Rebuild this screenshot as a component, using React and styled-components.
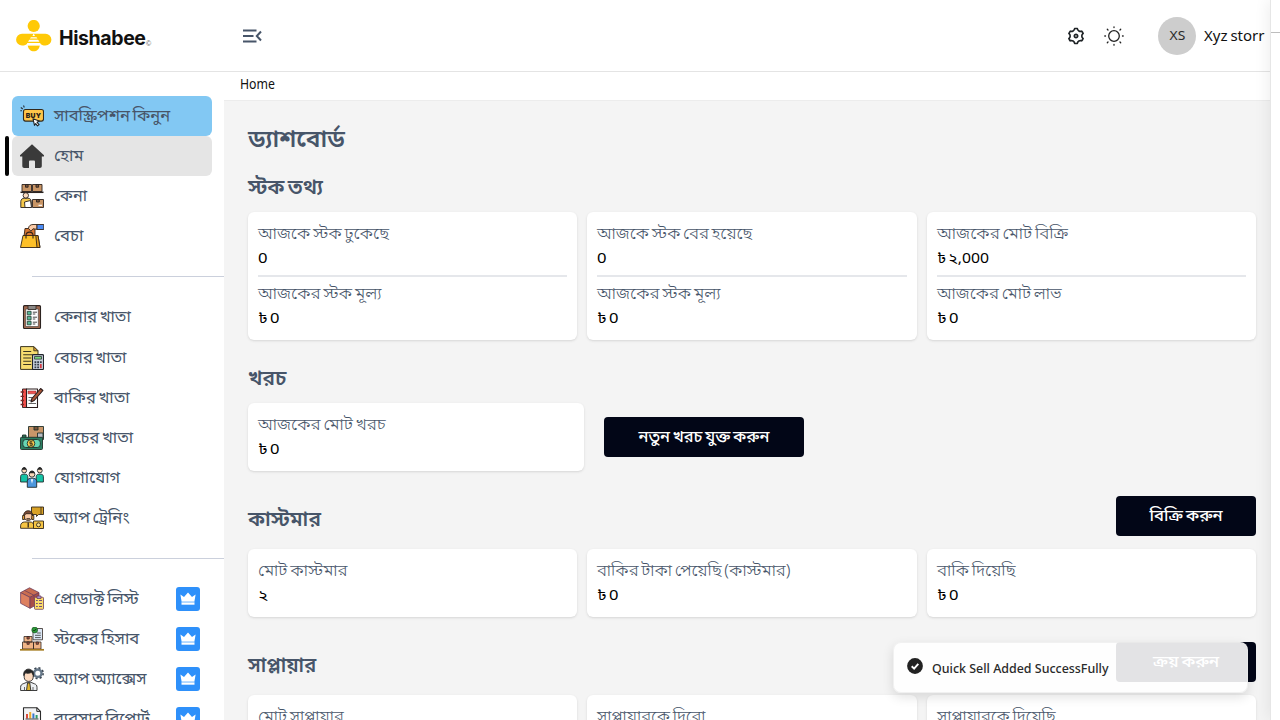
import React, { useLayoutEffect, useRef, useState } from "react";
import styled, { createGlobalStyle } from "styled-components";
import { RiSettings3Line } from "react-icons/ri";

const Global = createGlobalStyle`
  *, *::before, *::after { box-sizing: border-box; }
  html, body { margin: 0; height: 100%; overflow: hidden; }
  body {
    background: #fff;
    color: #020202;
    font-family: "Noto Sans Bengali", "Noto Sans", "Open Sans", sans-serif;
    font-size: 16px;
    line-height: 24px;
  }
  svg { display: block; flex: none; }
`;

/* ---------- text ---------- */

const FitSpan = styled.span`
  display: inline-block;
  white-space: pre;
  transform-origin: ${(p) => (p.$center ? "50% 50%" : "0 50%")};
`;

/* Condenses a label horizontally so that it takes the given width. */
function Fit({ width, center, children }) {
  const ref = useRef(null);
  const [scale, setScale] = useState(1);
  useLayoutEffect(() => {
    const natural = ref.current.offsetWidth;
    if (natural) setScale(width / natural);
  }, [width, children]);
  return (
    <FitSpan ref={ref} $center={center} style={{ transform: `scaleX(${scale})` }}>
      {children}
    </FitSpan>
  );
}

/* ---------- page frame ---------- */

const Page = styled.div`
  position: relative;
  display: flex;
  flex-direction: column;
  width: 1280px;
  height: 720px;
  overflow: hidden;
  background: #fff;
`;

const Header = styled.header`
  display: flex;
  align-items: center;
  flex: none;
  height: 72px;
  padding: 0 16px;
  border-bottom: 1px solid #e4e4e4;
  background: #fff;
`;

const Brand = styled.div`
  display: flex;
  align-items: center;
  width: 226px;
`;

const BrandName = styled.div`
  display: flex;
  align-items: flex-end;
  width: 92px;
  margin: 4px 0 0 7px;
  font: 650 19.5px/26px Inter, sans-serif;
  letter-spacing: -0.4px;
  color: #111;
`;

const BrandNameText = styled.span`
  width: 87px;
`;

const BrandMark = styled.span`
  font: 7px/15px "Liberation Sans", sans-serif;
  color: #555;
`;

const HeaderTools = styled.div`
  display: flex;
  align-items: center;
  margin-left: auto;
`;

const ToolIcon = styled.span`
  display: flex;
  align-items: center;
  justify-content: center;
  width: 20px;
  height: 20px;
  margin-right: ${(p) => p.$gap}px;
  color: #1f2326;
`;

const Avatar = styled.span`
  display: flex;
  align-items: center;
  justify-content: center;
  width: 38px;
  height: 38px;
  padding-top: 2px;
  border-radius: 50%;
  background: #cdcdcd;
  color: #2b2b2b;
  font-size: 13px;
  margin-right: 8px;
`;

const UserName = styled.span`
  width: 60px;
  padding-top: 2px;
  font-size: 15px;
  word-spacing: -1px;
  color: #111;
`;

const Body = styled.div`
  display: flex;
  flex: 1;
  min-height: 0;
`;

/* ---------- sidebar ---------- */

const Sidebar = styled.aside`
  display: flex;
  flex-direction: column;
  flex: none;
  width: 224px;
  padding-top: 24px;
  overflow: hidden;
  background: #fff;
`;

const NavGroup = styled.nav`
  display: flex;
  flex-direction: column;
  flex: none;
  padding: 0 12px;
`;

const NavDivider = styled.hr`
  flex: none;
  width: 192px;
  height: 1px;
  margin: 20px 0 20px 32px;
  border: 0;
  background: #cbd0dc;
`;

const NavItem = styled.a`
  position: relative;
  display: flex;
  align-items: center;
  height: 40px;
  margin-bottom: ${(p) => p.$after || 0}px;
  padding: 0 12px 0 8px;
  border-radius: 6px;
  background: ${(p) => ({ promo: "#82c8f3", active: "#e5e5e5" })[p.$tone] || "transparent"};
  color: #475569;
  font-size: 15.5px;
`;

const ActiveBar = styled.span`
  position: absolute;
  left: -7px;
  top: 0;
  width: 4px;
  height: 40px;
  border-radius: 2px;
  background: #050505;
`;

const NavLabel = styled.span`
  flex: 1;
  margin-left: 10px;
  padding-top: 1px;
  white-space: nowrap;
  word-spacing: -1.5px;
`;

const Crown = styled.span`
  display: flex;
  align-items: center;
  justify-content: center;
  width: 24px;
  height: 24px;
  border-radius: 3px;
  background: #2e90fa;
`;

/* ---------- content ---------- */

const Main = styled.main`
  display: flex;
  flex-direction: column;
  flex: 1;
  min-width: 0;
`;

const Breadcrumb = styled.div`
  display: flex;
  align-items: center;
  flex: none;
  height: 28px;
  padding: 0 16px;
  background: #fff;
  color: #111;
  font-size: 13.5px;
`;

const Content = styled.div`
  display: flex;
  flex-direction: column;
  flex: 1;
  min-height: 0;
  padding: 22px 24px 0;
  border-top: 1px solid #ececec;
  background: #f4f4f4;
  overflow: hidden;
`;

const PageTitle = styled.h1`
  flex: none;
  height: 36px;
  margin: 0 0 14px;
  font-size: 24px;
  line-height: 37px;
  font-weight: 600;
  color: #475569;
`;

const SectionHead = styled.div`
  display: flex;
  align-items: flex-start;
  justify-content: space-between;
  flex: none;
  height: ${(p) => p.$height}px;
  margin-top: ${(p) => p.$top || 0}px;
`;

const SectionTitle = styled.h2`
  margin: ${(p) => p.$drop || 0}px 0 0;
  font-size: 20px;
  line-height: 33px;
  font-weight: 600;
  word-spacing: -2px;
  color: #475569;
`;

const CardGrid = styled.div`
  display: grid;
  grid-template-columns: repeat(3, 1fr);
  gap: 10px;
  flex: none;
`;

const ExpenseRow = styled.div`
  display: grid;
  grid-template-columns: 336px 200px;
  gap: 20px;
  align-items: center;
  flex: none;
`;

const Card = styled.section`
  padding: 10px;
  border-radius: 6px;
  background: #fff;
  box-shadow: 0 1px 3px rgba(0, 0, 0, 0.1), 0 1px 2px -1px rgba(0, 0, 0, 0.1);
`;

const CardLabel = styled.div`
  height: 24px;
  color: #475569;
  font-size: 15.5px;
  font-weight: 350;
  line-height: 27px;
  word-spacing: -1.5px;
  white-space: nowrap;
`;

const CardValue = styled.div`
  height: 24px;
  color: #000;
  font-size: 15px;
  line-height: 27px;
  word-spacing: -2px;
  white-space: nowrap;
`;

const CardRule = styled.hr`
  height: 2px;
  margin: 5px 0;
  border: 0;
  background: #e5e7eb;
`;

const Button = styled.button`
  display: flex;
  align-items: center;
  justify-content: center;
  width: ${(p) => p.$width}px;
  height: 40px;
  padding: 2px 0 0;
  border: 0;
  border-radius: 4px;
  background: #020617;
  color: #fff;
  font-family: inherit;
  font-size: 15.5px;
  font-weight: 500;
  word-spacing: -1.5px;
`;

/* ---------- overlays ---------- */

const Toast = styled.div`
  position: absolute;
  left: 893px;
  top: 642px;
  display: flex;
  align-items: center;
  width: 355px;
  height: 51px;
  padding: 0 14px;
  border: 1px solid rgba(235, 235, 235, 0.7);
  border-radius: 8px;
  background: rgba(255, 255, 255, 0.89);
  box-shadow: 0 4px 12px rgba(0, 0, 0, 0.12);
  color: #2a2a2a;
  font: 500 13px/20px "Noto Sans", sans-serif;
`;

const ToastIcon = styled.span`
  margin: -3px 9px 0 -1px;
`;

const SidePanel = styled.aside`
  position: absolute;
  right: 0;
  top: 0;
  width: 10px;
  height: 720px;
  padding-top: 32px;
  border-left: 1px solid #e6e6e6;
  background: #fff;
  box-shadow: 0 0 16px rgba(0, 0, 0, 0.1);
`;

const PanelRule = styled.hr`
  height: 1px;
  margin: 0;
  border: 0;
  background: #bdbdbd;
`;

/* ---------- drawings ---------- */

const BeeLogo = () => (
  <svg width="36" height="32" viewBox="0 0 36 32">
    <g fill="#ffc907">
      <circle cx="17.7" cy="6" r="6.1" />
      <path d="M6 13.8h23.500a5.900 5.900 0 0 1 0 11.800c-2.600 0-4.400-.8-5.700-2.600H11.700c-1.300 1.800-3.100 2.600-5.700 2.600a5.900 5.900 0 0 1 0-11.800z" />
      <path d="M11.700 25.500h12.100c-.6 3.600-3 5.800-6.050 5.800s-5.450-2.200-6.050-5.800z" />
    </g>
    <g fill="#fff">
      <path d="M17.700 13.500l1.300 2.600h-2.600z" />
      <path d="M14.900 17.200h5.600l.9 1.300h-7.400z" />
      <path d="M13.300 19.800h8.800l1.300 2h-11.400z" />
      <path d="M11.300 23h12.900v2.300H11.300z" />
    </g>
  </svg>
);

const CollapseIcon = () => (
  <svg width="22" height="16" viewBox="0 0 22 16" fill="none" stroke="#475569" strokeWidth="2">
    <path d="M1 2.500h13.500M1 8h10.500M1 13.500h13.500M19 3.500L14.800 8l4.200 4.500" />
  </svg>
);

const SunIcon = () => (
  <svg width="20" height="20" viewBox="0 0 20 20" fill="none" stroke="#222" strokeWidth="1.3" strokeLinecap="round">
    <circle cx="10" cy="10" r="5.300" />
    <path d="M10 .8v.7M10 18.500v.7M.8 10h.7M18.500 10h.7M3.300 3.300l.7.7M16 16l.7.7M3.300 16.700l.7-.7M16 4l.7-.7" />
  </svg>
);

const CrownIcon = () => (
  <svg width="16" height="14" viewBox="0 0 16 14" fill="#fff">
    <path d="M.4 2.600L4 5l4-4.400L12 5l3.600-2.400L14.500 9h-13z" />
    <path d="M1.500 9h13v1.800h-13z" fill="#b9dbff" />
    <path d="M1.500 10.800h13v1.900h-13z" />
  </svg>
);

const CheckIcon = () => (
  <svg width="16" height="16" viewBox="0 0 16 16">
    <circle cx="8" cy="8" r="7.900" fill="#222" />
    <path d="M4.700 8.300L7.100 10.600 11.300 5.800" fill="none" stroke="#fff" strokeWidth="1.900" />
  </svg>
);

const Art = ({ children }) => (
  <svg width="24" height="24" viewBox="0 0 24 24" strokeLinejoin="round">
    {children}
  </svg>
);

const BuyArt = () => (
  <Art>
    <path d="M.8 3.500l2 1.500M3.500 1.500l.8 2M.3 6.800h1.700" stroke="#25303a" strokeWidth="1.100" />
    <rect x="3.500" y="5.500" width="20" height="11.600" rx="2" fill="#ffc64a" stroke="#33291a" strokeWidth="1.100" />
    <text x="13.500" y="13.700" textAnchor="middle" fontFamily="Inter, sans-serif" fontWeight="900" fontSize="6.800" letterSpacing=".3" fill="#2a2118">BUY</text>
    <path d="M13 14.800l6.300 2.300-2.200 1.200 2 2.300-1.600 1.300-1.800-2.300-1.200 1.700z" fill="#fff" stroke="#1d2226" strokeWidth="1.100" />
  </Art>
);

const HomeArt = () => (
  <Art>
    <path d="M12 .2L24 11.200c.4.5.1 1.300-.6 1.300h-1.600V22c0 1.300-.7 2-2 2H15v-6.300c0-.8-.5-1.200-1.200-1.200h-3.600c-.7 0-1.200.4-1.200 1.200V24H4.300c-1.300 0-2-.7-2-2v-9.500H.6c-.7 0-1-.8-.6-1.300z" fill="#3a3a3a" />
  </Art>
);

const StockArt = () => (
  <Art>
    <g stroke="#2a2320" strokeWidth=".9">
      <path d="M2 .5h9.500v7H2zM12.500.5H22v7h-9.500z" fill="#c99565" />
      <path d="M5.500.5h2.600v2.700H5.500zM16 .5h2.600v2.700H16z" fill="#7b5438" />
      <path d="M.5 8.300h23" strokeWidth="1.500" />
      <path d="M12.500 15.500h11v8h-11z" fill="#c99565" />
      <path d="M16.500 15.500h2.800v2.500h-2.800z" fill="#7b5438" />
      <path d="M.8 23.500v-6c0-2 1.500-3.300 3.500-3.300h3.500c2 0 3.500 1.300 3.500 3.300v6z" fill="#f5c84c" />
      <circle cx="5.800" cy="11.400" r="2.700" fill="#fbdcc0" />
      <path d="M4.500 18l6-1.500 1 7H5z" fill="#fff" />
    </g>
    <path d="M18.500 21.300h3.500" stroke="#fff" strokeWidth="1.200" />
  </Art>
);

const SellArt = () => (
  <Art>
    <g stroke="#33251a" strokeWidth=".9">
      <path d="M5 4.500h10v8H4z" fill="#d97834" />
      <path d="M8.500 4.500c0-2.500 2-4 4.500-4h4v4.800l-4-.5-2 2.400z" fill="#fbcba7" />
      <path d="M17 .5h6.800v5H17z" fill="#4b8bf5" />
      <path d="M3 11.500h15l2 12H.5z" fill="#fdc029" />
      <path d="M15.800 11.500H18l2 12h-3z" fill="#e39b18" />
      <path d="M6 14.500v-3c0-4.500 7-4.500 7 0v3" fill="none" strokeWidth="1.100" />
    </g>
  </Art>
);

const ClipboardArt = () => (
  <Art>
    <rect x="3.500" y=".6" width="17" height="22.900" rx="1" fill="#a06a50" stroke="#2c2320" strokeWidth="1.100" />
    <path d="M5.700 4h12.600v17.500H5.700z" fill="#fff" stroke="#3d3532" strokeWidth=".6" />
    <path d="M8 .5h8v4H8z" fill="#8a8886" stroke="#2c2320" strokeWidth=".8" />
    <g fill="#57b894" stroke="#20372e" strokeWidth=".8">
      <path d="M7.300 6.300h3.800v3.500H7.300zM7.300 11.300h3.800v3.500H7.300zM7.300 16.300h3.800v3.500H7.300z" />
    </g>
    <path d="M12.800 7.200h4.200M12.800 9h2.500M12.800 12.200h4.200M12.800 14h2.500M12.800 17.200h4.200M12.800 19h2.500" stroke="#333" strokeWidth=".9" />
  </Art>
);

const LedgerArt = () => (
  <Art>
    <path d="M.6.6h13.200l4.200 4.200v18.600H.6z" fill="#f7dc6f" stroke="#3b3520" strokeWidth="1" />
    <path d="M13.800.6v4.200H18z" fill="#d9982f" stroke="#3b3520" strokeWidth=".9" />
    <path d="M3.200 5.500h8M3.200 8.700h10M3.200 12h8M3.200 15.300h8M3.200 18.500h8" stroke="#3b3520" strokeWidth="1.100" />
    <rect x="12.500" y="8.600" width="11" height="15" rx="1" fill="#c7d0dc" stroke="#20242b" strokeWidth="1.100" />
    <path d="M14.500 10.500h7v2.600h-7z" fill="#7bd47f" stroke="#20242b" strokeWidth=".7" />
    <path d="M14.500 15.200h1.800v1.800h-1.800zM17.200 15.200H19v1.800h-1.800zM19.900 15.200h1.800v1.800h-1.800zM14.500 17.800h1.800v1.800h-1.800zM17.200 17.800H19v1.800h-1.800zM14.500 20.400h1.800v1.800h-1.800zM17.200 20.400H19v1.800h-1.800z" fill="#333b47" />
    <path d="M19.900 18h1.800v4.200h-1.800z" fill="#d43b45" />
  </Art>
);

const NotebookArt = () => (
  <Art>
    <rect x="2.500" y="3" width="4.500" height="18.500" fill="#f4504b" stroke="#2a1c1c" strokeWidth=".9" />
    <path d="M6.500 3H17.500v18.500H6.500z" fill="#fff" stroke="#2a1c1c" strokeWidth="1.100" />
    <path d="M8 5h8v2.800H8z" fill="#ef5350" stroke="#8a2b2b" strokeWidth=".5" />
    <path d="M8.500 11.500H14M8.500 14.300H12M8.500 17.500H16" stroke="#555" strokeWidth=".9" />
    <path d="M.6 6h3.500M.6 10.300h3.500M.6 14.500h3.500M.6 18.500h3.500" stroke="#7c2626" strokeWidth="1.300" />
    <path d="M20.600 2.500l2.300 2-8.700 10-3.200 1.400.9-3.400z" fill="#a85637" stroke="#2a1c1c" strokeWidth="1.100" />
  </Art>
);

const ExpenseArt = () => (
  <Art>
    <g stroke="#20312b" strokeWidth=".9">
      <path d="M8.500.5h15v13h-15z" fill="#c99669" />
      <path d="M14 .5h4v3.500h-4z" fill="#7b5438" />
      <path d="M17.500 7h5.500v5h-5.500z" fill="#b9bcc4" />
      <path d="M2.500 12V9h3.500v3" fill="#2d7a5b" />
      <rect x=".5" y="11.300" width="22" height="12.200" rx="1" fill="#2b7f62" />
      <rect x="2.800" y="13.500" width="17.500" height="8" rx="3" fill="#67d6b5" />
      <circle cx="11" cy="17.500" r="3.800" fill="#fbc94c" />
    </g>
    <path d="M12.400 15.800H9.800v1.700h2.600v1.800H9.700M11 14.800v5.400" fill="none" stroke="#3b3520" strokeWidth=".8" />
  </Art>
);

const ContactArt = () => (
  <Art>
    <g stroke="#1f2a2c" strokeWidth=".9">
      <circle cx="4.200" cy="4.500" r="2.400" fill="#fbd7b8" />
      <circle cx="19.800" cy="4.500" r="2.400" fill="#fbd7b8" />
      <path d="M.6 16v-5.300c0-1.600 1-2.500 2.500-2.500h2.200c1.500 0 2.500.9 2.500 2.500V16z" fill="#15c3a5" />
      <path d="M16.200 16v-5.300c0-1.600 1-2.500 2.500-2.500h2.200c1.500 0 2.500.9 2.500 2.500V16z" fill="#15c3a5" />
      <circle cx="12" cy="8.300" r="2.900" fill="#fbd7b8" />
      <path d="M7.300 21.300v-5.800c0-1.900 1.200-3.200 3-3.200h3.400c1.800 0 3 1.300 3 3.200v5.800z" fill="#4c97dd" />
    </g>
    <path d="M1.900 3.700c.5-3.500 4.200-3.500 4.600 0zM17.500 3.700c.5-3.500 4.200-3.500 4.600 0zM9.300 7.300c.5-3.700 5-3.700 5.400 0z" fill="#252525" />
    <path d="M12 12.500l1 1.300-1 4-1-4z" fill="#fff" />
  </Art>
);

const TrainingArt = () => (
  <Art>
    <g stroke="#33281c" strokeWidth=".9">
      <path d="M11.500 1h12v7.500h-5l-2 2v-2h-5z" fill="#d9a226" />
      <path d="M.6 22.300v-2.500c0-2.300 1.700-3.800 4-3.800H10c2.300 0 4 1.500 4 3.800v2.500z" fill="#f6c544" />
      <circle cx="8.200" cy="10.200" r="4.300" fill="#fbcba7" />
      <path d="M3.700 10c-.5-7 9.500-7 9 0l-1.500-2.300H6z" fill="#7b4b36" />
      <path d="M2.600 9.500h2v4h-2zM11.800 9.500h2v4h-2z" fill="#f0a93b" />
      <path d="M13.500 15h10v7.500h-10z" fill="#f6c544" />
      <circle cx="18.500" cy="18.800" r="2" fill="#fbe08a" />
    </g>
    <path d="M6.500 12.800h3.500M8.200 16.500v5" stroke="#33281c" strokeWidth="1.300" />
    <path d="M21 1v7" stroke="#33281c" strokeWidth=".8" />
  </Art>
);

const ProductArt = () => (
  <Art>
    <g stroke="#70405d" strokeWidth=".8">
      <path d="M9.500.8l9.500 4.800-9 4.800L.6 5.600z" fill="#c96d50" />
      <path d="M.6 5.600L10 10.400v10.900L.6 16.300z" fill="#dd8060" />
      <path d="M19 5.600v10.900l-9 4.800V10.400z" fill="#a84d48" />
      <path d="M4.700 3.500l9.400 4.800v3.200" fill="none" />
      <rect x="14.500" y="10.300" width="9" height="12" rx=".8" fill="#fbdc69" />
      <path d="M17 9h4v2.500h-4z" fill="#a993d1" />
    </g>
    <path d="M16 13.500h1.800M16 16.500h1.800M16 19.500h1.800M19 13.500h3M19 16.500h3M19 19.500h3" stroke="#715181" strokeWidth="1.200" />
  </Art>
);

const StockReportArt = () => (
  <Art>
    <g stroke="#332a25" strokeWidth=".8">
      <path d="M13 1.500h9.500v11.300H13z" fill="#dbe7f5" />
      <path d="M4 9.500h8v5.500H4zM2.500 15h11v7h-11zM13.500 15h7.500v7h-7.500z" fill="#f0b486" />
      <path d="M7 9.500h2.200V12H7zM7 15h2.200v2.300H7zM16.200 15h2.200v2.300h-2.200z" fill="#b9503e" />
    </g>
    <path d="M17 6h3.800M15 8.300h5.800M15 10.600h5.800" stroke="#333" strokeWidth=".8" />
    <circle cx="14.700" cy="3" r="2.900" fill="#2b9a38" stroke="#1d5424" strokeWidth=".7" />
    <path d="M13.300 3l1 1 1.800-2" fill="none" stroke="#0d3512" />
    <path d="M0 22.800h24" stroke="#a47a1e" strokeWidth="1.700" />
  </Art>
);

const AccessArt = () => (
  <Art>
    <circle cx="17.800" cy="6.200" r="3.700" fill="none" stroke="#66788a" strokeWidth="2.400" />
    <circle cx="17.800" cy="6.200" r="5.400" fill="none" stroke="#3d4854" strokeWidth="1.500" strokeDasharray="2.100 2.140" />
    <g stroke="#2a2a2a" strokeWidth=".9">
      <path d="M.6 23.500v-3.200c0-2 1-3 2.500-3.500l3.700-1.500h4l3.700 1.500c1.500.5 2.500 1.500 2.500 3.500v3.200z" fill="#edf0f3" />
      <path d="M4.200 7.500c0-5.500 9-5.500 9 0v2.800c0 5.500-9 5.500-9 0z" fill="#fbd9bf" />
      <path d="M3.800 8.500C2.500 0 14.500 0 13.500 8.500l-2-3.200c-2 1.200-4.500 1.200-6 .5z" fill="#252525" />
      <path d="M7.500 16h2.300l1 7.500h-4.300z" fill="#e2b52e" />
    </g>
    <path d="M4.500 20v3.500M13 20v3.500" stroke="#444" strokeWidth=".8" />
  </Art>
);

const ReportArt = () => (
  <Art>
    <path d="M3.500.7h13.300l3.700 3.700v19H3.500z" fill="#f2f3f5" stroke="#2b2b2b" strokeWidth="1.100" />
    <path d="M16.800.7v3.700h3.700" fill="none" stroke="#2b2b2b" />
    <path d="M7 7v4.500" stroke="#d94b3d" strokeWidth="2" />
    <path d="M10.200 5v6.500" stroke="#eaaa2c" strokeWidth="2" />
    <path d="M13.400 6.500v5" stroke="#3476cd" strokeWidth="2" />
    <path d="M16.600 8v3.500" stroke="#2b9a68" strokeWidth="2" />
    <path d="M5.500 12h13M5.500 15h13M5.500 18h13" stroke="#333" strokeWidth=".9" />
  </Art>
);

/* ---------- data ---------- */

const navGroups = [
  [
    { label: "সাবস্ক্রিপশন কিনুন", w: 116, Icon: BuyArt, tone: "promo" },
    { label: "হোম", w: 29, Icon: HomeArt, tone: "active" },
    { label: "কেনা", w: 33.5, Icon: StockArt },
    { label: "বেচা", w: 29, Icon: SellArt },
  ],
  [
    { label: "কেনার খাতা", w: 77, Icon: ClipboardArt, after: 1 },
    { label: "বেচার খাতা", w: 73, Icon: LedgerArt },
    { label: "বাকির খাতা", w: 75.5, Icon: NotebookArt },
    { label: "খরচের খাতা", w: 79.5, Icon: ExpenseArt },
    { label: "যোগাযোগ", w: 66, Icon: ContactArt },
    { label: "অ্যাপ ট্রেনিং", w: 75.5, Icon: TrainingArt },
  ],
  [
    { label: "প্রোডাক্ট লিস্ট", w: 84.5, Icon: ProductArt, pro: true },
    { label: "স্টকের হিসাব", w: 85, Icon: StockReportArt, pro: true },
    { label: "অ্যাপ অ্যাক্সেস", w: 92.5, Icon: AccessArt, pro: true },
    { label: "ব্যবসার রিপোর্ট", w: 95.5, Icon: ReportArt, pro: true },
  ],
];

const stockCards = [
  [["আজকে স্টক ঢুকেছে", 130.5, "0", 10], ["আজকের স্টক মূল্য", 123.5, "৳ 0", 21]],
  [["আজকে স্টক বের হয়েছে", 155, "0", 10], ["আজকের স্টক মূল্য", 123.5, "৳ 0", 21]],
  [["আজকের মোট বিক্রি", 130.5, "৳ ২,000", 51.5], ["আজকের মোট লাভ", 124.5, "৳ 0", 21]],
];

const customerCards = [
  [["মোট কাস্টমার", 90, "২", 10]],
  [["বাকির টাকা পেয়েছি (কাস্টমার)", 193, "৳ 0", 21]],
  [["বাকি দিয়েছি", 79, "৳ 0", 21]],
];

const supplierCards = [
  [["মোট সাপ্লায়ার", 85.5, "0", 10]],
  [["সাপ্লায়ারকে দিবো", 108, "৳ 0", 21]],
  [["সাপ্লায়ারকে দিয়েছি", 118.5, "৳ 0", 21]],
];

function StatCard({ stats }) {
  return (
    <Card>
      {stats.map(([label, lw, value, vw], i) => (
        <React.Fragment key={label}>
          {i > 0 && <CardRule />}
          <CardLabel><Fit width={lw}>{label}</Fit></CardLabel>
          <CardValue><Fit width={vw}>{value}</Fit></CardValue>
        </React.Fragment>
      ))}
    </Card>
  );
}

const StatGrid = ({ cards }) => (
  <CardGrid>
    {cards.map((stats) => <StatCard key={stats[0][0]} stats={stats} />)}
  </CardGrid>
);

export default function App() {
  return (
    <Page>
      <Global />
      <Header>
        <Brand>
          <BeeLogo />
          <BrandName>
            <BrandNameText><Fit width={87}>Hishabee</Fit></BrandNameText>
            <BrandMark>©</BrandMark>
          </BrandName>
        </Brand>
        <CollapseIcon />
        <HeaderTools>
          <ToolIcon $gap={18}><RiSettings3Line size={20} /></ToolIcon>
          <ToolIcon $gap={34}><SunIcon /></ToolIcon>
          <Avatar><Fit width={16} center>XS</Fit></Avatar>
          <UserName><Fit width={60}>Xyz storr</Fit></UserName>
        </HeaderTools>
      </Header>
      <Body>
        <Sidebar>
          {navGroups.map((group, g) => (
            <React.Fragment key={g}>
              {g > 0 && <NavDivider />}
              <NavGroup>
                {group.map(({ label, w, Icon, tone, after, pro }) => (
                  <NavItem key={label} $tone={tone} $after={after}>
                    {tone === "active" && <ActiveBar />}
                    <Icon />
                    <NavLabel><Fit width={w}>{label}</Fit></NavLabel>
                    {pro && <Crown><CrownIcon /></Crown>}
                  </NavItem>
                ))}
              </NavGroup>
            </React.Fragment>
          ))}
        </Sidebar>
        <Main>
          <Breadcrumb><Fit width={34.5}>Home</Fit></Breadcrumb>
          <Content>
            <PageTitle><Fit width={97}>ড্যাশবোর্ড</Fit></PageTitle>
            <SectionHead $height={39}>
              <SectionTitle><Fit width={75}>স্টক তথ্য</Fit></SectionTitle>
            </SectionHead>
            <StatGrid cards={stockCards} />
            <SectionHead $top={24} $height={39}>
              <SectionTitle><Fit width={38.5}>খরচ</Fit></SectionTitle>
            </SectionHead>
            <ExpenseRow>
              <StatCard stats={[["আজকের মোট খরচ", 128, "৳ 0", 21]]} />
              <Button $width={200}><Fit width={131} center>নতুন খরচ যুক্ত করুন</Fit></Button>
            </ExpenseRow>
            <SectionHead $top={25} $height={53}>
              <SectionTitle $drop={9}><Fit width={73}>কাস্টমার</Fit></SectionTitle>
              <Button $width={140}><Fit width={73} center>বিক্রি করুন</Fit></Button>
            </SectionHead>
            <StatGrid cards={customerCards} />
            <SectionHead $top={25} $height={53}>
              <SectionTitle $drop={9}><Fit width={68}>সাপ্লায়ার</Fit></SectionTitle>
              <Button $width={140}><Fit width={66} center>ক্রয় করুন</Fit></Button>
            </SectionHead>
            <StatGrid cards={supplierCards} />
          </Content>
        </Main>
      </Body>
      <Toast>
        <ToastIcon><CheckIcon /></ToastIcon>
        <Fit width={177}>Quick Sell Added SuccessFully</Fit>
      </Toast>
      <SidePanel><PanelRule /></SidePanel>
    </Page>
  );
}
